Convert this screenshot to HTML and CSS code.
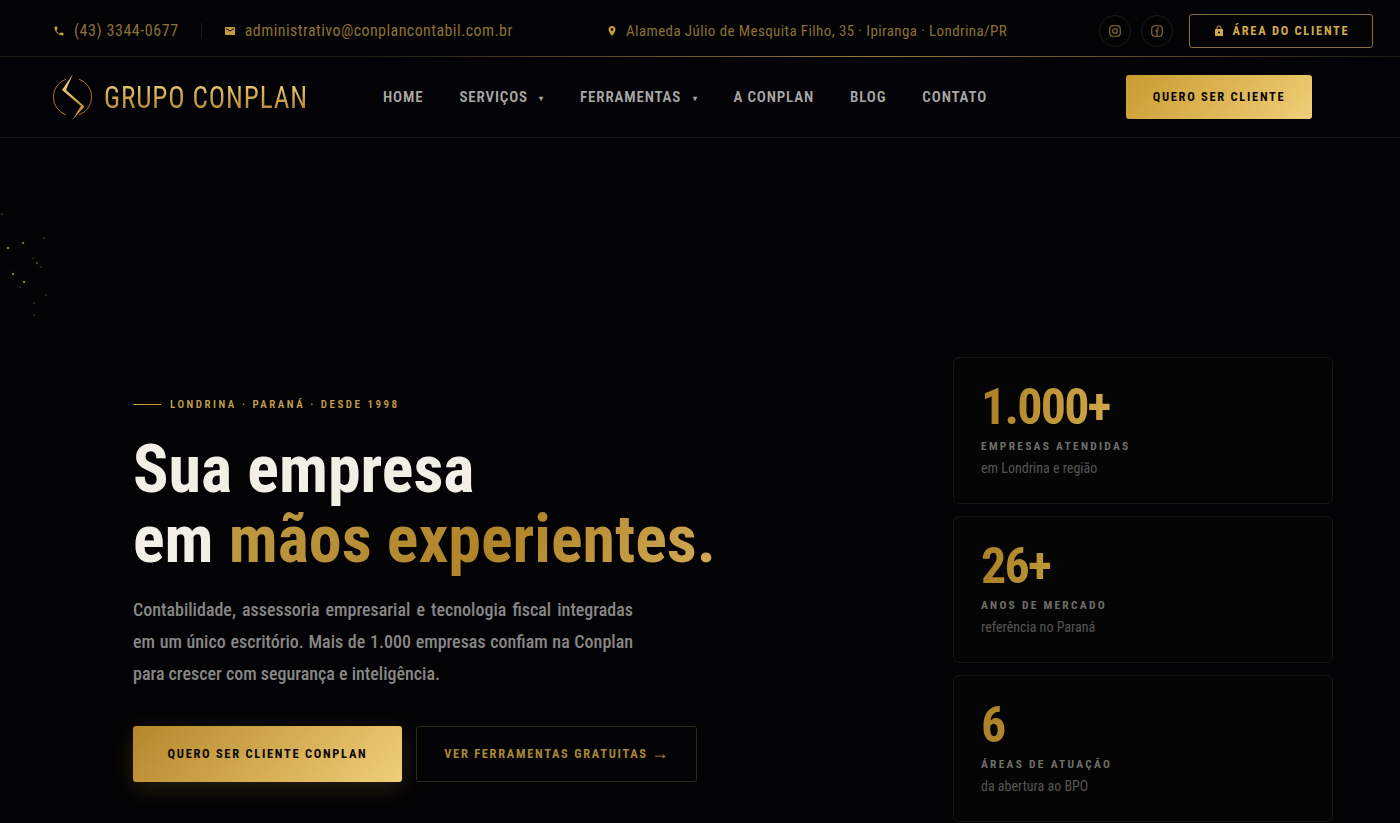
FILE: index.html
```html
<!DOCTYPE html>
<html lang="pt-BR">
<head>
  <meta charset="UTF-8">
  <meta name="viewport" content="width=device-width, initial-scale=1.0">
  <title>Grupo Conplan</title>
  <link rel="stylesheet" href="styles.css">
</head>
<body>
  <div class="topbar">
    <div class="top-contact">
      <a class="top-item top-phone">
        <svg class="ico" viewBox="0 0 24 24"><path d="M6.62 10.79c1.44 2.83 3.76 5.14 6.59 6.59l2.2-2.2c.27-.27.67-.36 1.02-.24 1.12.37 2.33.57 3.57.57.55 0 1 .45 1 1V20c0 .55-.45 1-1 1-9.39 0-17-7.61-17-17 0-.55.45-1 1-1h3.5c.55 0 1 .45 1 1 0 1.25.2 2.45.57 3.57.11.35.03.74-.25 1.02l-2.2 2.2z"/></svg>
        (43) 3344-0677
      </a>
      <span class="top-sep"></span>
      <a class="top-item top-mail">
        <svg class="ico" viewBox="0 0 24 24"><path d="M20 4H4c-1.1 0-1.99.9-1.99 2L2 18c0 1.1.9 2 2 2h16c1.1 0 2-.9 2-2V6c0-1.1-.9-2-2-2zm0 4l-8 5-8-5V6l8 5 8-5v2z"/></svg>
        administrativo@conplancontabil.com.br
      </a>
    </div>
    <div class="top-address">
      <svg class="ico" viewBox="0 0 24 24"><path d="M12 2C8.13 2 5 5.13 5 9c0 5.25 7 13 7 13s7-7.75 7-13c0-3.87-3.13-7-7-7zm0 9.5c-1.38 0-2.5-1.12-2.5-2.5s1.12-2.5 2.5-2.5 2.5 1.12 2.5 2.5-1.12 2.5-2.5 2.5z"/></svg>
      Alameda Júlio de Mesquita Filho, 35 · Ipiranga · Londrina/PR
    </div>
    <div class="top-actions">
      <a class="social">
        <svg viewBox="0 0 24 24"><rect x="3" y="3" width="18" height="18" rx="5"/><circle cx="12" cy="12" r="4"/><circle class="dot" cx="17.2" cy="6.8" r="1"/></svg>
      </a>
      <a class="social">
        <svg viewBox="0 0 24 24"><rect x="3" y="3" width="18" height="18" rx="5"/><path d="M15.5 6.5h-1.2c-1.3 0-2.3 1-2.3 2.3V21M9 11.5h6"/></svg>
      </a>
      <a class="client-btn">
        <svg class="ico" viewBox="0 0 24 24"><path d="M18 8h-1V6c0-2.76-2.24-5-5-5S7 3.24 7 6v2H6c-1.1 0-2 .9-2 2v10c0 1.1.9 2 2 2h12c1.1 0 2-.9 2-2V10c0-1.1-.9-2-2-2zm-6 9c-1.1 0-2-.9-2-2s.9-2 2-2 2 .9 2 2-.9 2-2 2zm3.1-9H8.9V6c0-1.71 1.39-3.1 3.1-3.1 1.71 0 3.1 1.39 3.1 3.1v2z"/></svg>
        ÁREA DO CLIENTE
      </a>
    </div>
  </div>

  <header class="navbar">
    <a class="logo">
      <svg class="logo-mark" viewBox="0 0 40 48">
        <defs>
          <linearGradient id="goldmark" x1="0" y1="0" x2="1" y2="1">
            <stop offset="0" stop-color="#f6d67c"/>
            <stop offset="1" stop-color="#b98a2a"/>
          </linearGradient>
        </defs>
        <path class="mark-ring" d="M13 6.1A19 19 0 0 0 13 41.9M26 6.1A19 19 0 0 1 26 41.9"/>
        <path class="mark-bolt" d="M20 1L9 17 28 33 19 47.5 31.5 33.5 13 17z"/>
      </svg>
      <span class="logo-text">GRUPO CONPLAN</span>
    </a>
    <nav class="nav-links">
      <a>HOME</a>
      <a>SERVIÇOS <i class="caret">▾</i></a>
      <a>FERRAMENTAS <i class="caret">▾</i></a>
      <a>A CONPLAN</a>
      <a>BLOG</a>
      <a>CONTATO</a>
    </nav>
    <a class="nav-cta">QUERO SER CLIENTE</a>
  </header>

  <main class="hero">
    <svg class="particles" viewBox="0 0 60 120">
      <circle cx="8" cy="47" r="1.1"/><circle cx="23" cy="42" r=".9"/><circle cx="13" cy="73" r="1.1"/>
      <circle cx="24" cy="81" r="1.1"/><circle cx="37" cy="62" r=".8"/><circle cx="41" cy="66" r=".6"/>
      <circle cx="44" cy="37" r=".5"/><circle cx="46" cy="94" r=".5"/><circle cx="34" cy="102" r=".5"/>
      <circle cx="34" cy="114" r=".6"/><circle cx="20" cy="86" r=".5"/><circle cx="33" cy="57" r=".5"/>
      <circle cx="2" cy="13" r=".5"/>
    </svg>
    <section class="hero-copy">
      <div class="eyebrow">LONDRINA · PARANÁ · DESDE 1998</div>
      <h1>Sua empresa<br>em <span class="gold-text">mãos experientes.</span></h1>
      <p class="lead">Contabilidade, assessoria empresarial e tecnologia fiscal integradas em um único escritório. Mais de 1.000 empresas confiam na Conplan para crescer com segurança e inteligência.</p>
      <div class="hero-btns">
        <a class="btn-gold">QUERO SER CLIENTE CONPLAN</a>
        <a class="btn-line">VER FERRAMENTAS GRATUITAS <span class="arrow">→</span></a>
      </div>
    </section>
    <aside class="stats">
      <div class="stat-card">
        <div class="stat-num">1.000+</div>
        <div class="stat-label">EMPRESAS ATENDIDAS</div>
        <div class="stat-sub">em Londrina e região</div>
      </div>
      <div class="stat-card">
        <div class="stat-num">26+</div>
        <div class="stat-label">ANOS DE MERCADO</div>
        <div class="stat-sub">referência no Paraná</div>
      </div>
      <div class="stat-card">
        <div class="stat-num">6</div>
        <div class="stat-label">ÁREAS DE ATUAÇÃO</div>
        <div class="stat-sub">da abertura ao BPO</div>
      </div>
    </aside>
  </main>
</body>
</html>
```

FILE: styles.css
```css
* {
  box-sizing: border-box;
}
html, body {
  height: 100%;
}
body {
  margin: 0;
  overflow: hidden;
  background: #030305;
  color: #f2efe6;
  font-family: Roboto, "Liberation Sans", sans-serif;
  font-stretch: 75%;
}
a {
  color: inherit;
  text-decoration: none;
}
.ico {
  width: 12px;
  height: 12px;
  fill: currentColor;
  flex: none;
}

/* barra superior */
.topbar {
  position: relative;
  height: 57px;
  display: flex;
  align-items: center;
  padding: 5px 27px 0 53px;
  background: #030305;
  border-bottom: 1px solid #1c1a14;
  color: #8d7035;
  font-size: 16px;
  letter-spacing: .43px;
}
.topbar::after {
  content: "";
  position: absolute;
  left: 25%;
  right: 0;
  bottom: -1px;
  height: 1px;
  background: linear-gradient(90deg, transparent, #9a7c3c 50%, transparent);
}
.top-contact {
  display: flex;
  align-items: center;
  width: 553px;
}
.top-item {
  display: flex;
  align-items: center;
  gap: 8px;
}
.top-phone {
  gap: 9px;
  letter-spacing: .57px;
}
.top-mail {
  gap: 9px;
}
.top-item .ico {
  color: #c79c3f;
}
.top-sep {
  width: 1px;
  height: 16px;
  margin: 0 22px;
  background: #1d1b15;
}
.top-address {
  display: flex;
  align-items: center;
  gap: 8px;
  font-size: 15px;
  letter-spacing: .4px;
}
.top-address .ico {
  color: #c79c3f;
}
.top-actions {
  margin-left: auto;
  display: flex;
  align-items: center;
  gap: 10px;
}
.social {
  width: 32px;
  height: 32px;
  display: flex;
  align-items: center;
  justify-content: center;
  border: 1px solid #1c1a13;
  border-radius: 50%;
  color: #8d7035;
}
.social svg {
  width: 14px;
  height: 14px;
  fill: none;
  stroke: currentColor;
  stroke-width: 1.8;
}
.social svg .dot {
  fill: currentColor;
  stroke: none;
}
.client-btn {
  display: flex;
  align-items: center;
  gap: 8px;
  width: 184px;
  height: 34px;
  margin-left: 6px;
  justify-content: center;
  border: 1px solid #86703f;
  border-radius: 3px;
  color: #d0a94d;
  font-size: 12.5px;
  font-weight: 700;
  letter-spacing: 1.7px;
}

/* navegacao */
.navbar {
  height: 81px;
  display: flex;
  align-items: center;
  padding: 0 0 1px 53px;
  background: #030307;
  border-bottom: 1px solid #1a1a1a;
}
.logo {
  display: flex;
  align-items: center;
  gap: 11px;
  width: 254px;
  flex: none;
}
.logo-mark {
  width: 40px;
  height: 48px;
  flex: none;
}
.mark-ring {
  fill: none;
  stroke: #b0832c;
  stroke-width: .9;
}
.mark-bolt {
  fill: url(#goldmark);
}
.logo-text {
  font-size: 32px;
  font-weight: 400;
  letter-spacing: 1px;
  white-space: nowrap;
  transform: scaleX(.85);
  transform-origin: left center;
  background: linear-gradient(180deg, #f5d77f, #a87a22);
  -webkit-background-clip: text;
  background-clip: text;
  color: transparent;
}
.nav-links {
  display: flex;
  align-items: center;
  gap: 36px;
  margin-left: 76px;
  color: #a9a8a4;
  font-size: 15px;
  font-weight: 600;
  letter-spacing: .85px;
  white-space: nowrap;
}
.caret {
  font-style: normal;
  font-size: 8px;
  margin-left: 7px;
  vertical-align: 1px;
}
.nav-cta {
  width: 186px;
  height: 44px;
  margin-left: 139px;
  display: flex;
  align-items: center;
  justify-content: center;
  border-radius: 3px;
  background: linear-gradient(135deg, #c89b2e, #f0cf78);
  color: #0a0805;
  font-size: 12.5px;
  font-weight: 700;
  letter-spacing: 1.7px;
}

/* hero */
.hero {
  position: relative;
  height: 686px;
  display: flex;
  justify-content: space-between;
  padding: 219px 67px 0 133px;
  background: #030305;
}
.particles {
  position: absolute;
  left: 0;
  top: 63px;
  width: 60px;
  height: 120px;
  fill: #d0b95e;
  opacity: .8;
  filter: drop-shadow(0 0 2px rgba(200, 170, 80, .6));
}
.hero-copy {
  width: 600px;
  padding-top: 41px;
}
.eyebrow {
  display: flex;
  align-items: center;
  gap: 9px;
  color: #c49f4c;
  font-size: 11px;
  font-weight: 600;
  letter-spacing: 2.5px;
  white-space: nowrap;
}
.eyebrow::before {
  content: "";
  width: 28px;
  height: 1px;
  background: #c29b42;
}
h1 {
  margin: 24px 0 0;
  font-size: 66px;
  font-weight: 700;
  line-height: 70px;
  white-space: nowrap;
  letter-spacing: 0;
}
.gold-text {
  background: linear-gradient(135deg, #c09a45, #b08428 55%, #d4ab58);
  -webkit-background-clip: text;
  background-clip: text;
  color: transparent;
}
.lead {
  width: 500px;
  margin: 19px 0 0;
  color: #888785;
  font-size: 18px;
  font-weight: 500;
  line-height: 32px;
  text-align: justify;
}
.hero-btns {
  display: flex;
  gap: 14px;
  margin-top: 36px;
}
.btn-gold, .btn-line {
  height: 56px;
  padding-bottom: 2px;
  display: flex;
  align-items: center;
  justify-content: center;
  border-radius: 3px;
  font-size: 12.5px;
  font-weight: 700;
  letter-spacing: 1.7px;
  white-space: nowrap;
}
.btn-gold {
  width: 269px;
  background: linear-gradient(135deg, #b5862a, #f0cf78);
  color: #0a0805;
  box-shadow: 0 6px 24px rgba(200, 150, 50, .2);
}
.btn-line {
  width: 281px;
  border: 1px solid #302819;
  color: #a98736;
}
.arrow {
  margin-left: 3px;
  font-size: 18px;
  font-weight: 400;
  letter-spacing: 0;
  line-height: 1;
}

/* cards */
.stats {
  width: 380px;
  display: flex;
  flex-direction: column;
  gap: 13px;
}
.stat-card {
  height: 147px;
  margin-bottom: -1px;
  padding: 23px 27px 0;
  border: 1px solid #171612;
  border-radius: 6px;
  background: #050505;
}
.stat-num {
  font-size: 50px;
  font-weight: 700;
  line-height: 52px;
  letter-spacing: -1.8px;
  background: linear-gradient(90deg, #ab8026, #d0a848 40%, #f0cf78);
  -webkit-background-clip: text;
  background-clip: text;
  color: transparent;
}
.stat-label {
  margin-top: 6px;
  color: #6e6e6a;
  font-size: 11.5px;
  font-weight: 700;
  letter-spacing: 2.25px;
}
.stat-sub {
  margin-top: 7px;
  color: #555552;
  font-size: 14px;
}
```
